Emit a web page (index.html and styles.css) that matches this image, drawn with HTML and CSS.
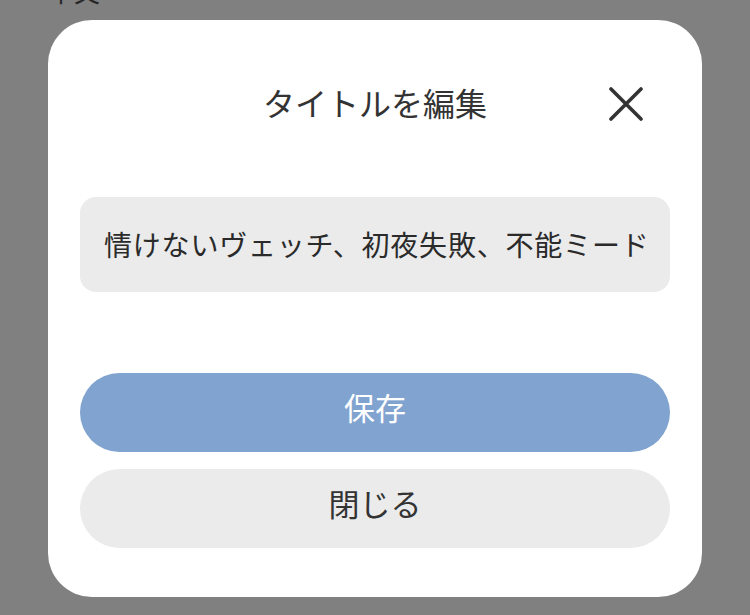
FILE: index.html
```html
<!DOCTYPE html>
<html lang="ja">
<head>
<meta charset="utf-8">
<title>タイトルを編集</title>
<link rel="stylesheet" href="styles.css">
</head>
<body>
<div class="peek"><span>本文</span></div>
<div class="modal" role="dialog" aria-labelledby="dlg-title">
  <div class="modal-header">
    <span class="spacer"></span>
    <h2 id="dlg-title" class="modal-title">タイトルを編集</h2>
    <button class="close-x" aria-label="閉じる">
      <svg width="36" height="34" viewBox="0 0 36 34" aria-hidden="true">
        <path d="M3 2 L33 32 M33 2 L3 32" stroke="#333" stroke-width="3.6" stroke-linecap="round" fill="none"/>
      </svg>
    </button>
  </div>
  <input class="title-input" type="text" value="情けないヴェッチ、初夜失敗、不能ミード">
  <div class="actions">
    <button class="btn btn-primary">保存</button>
    <button class="btn btn-secondary">閉じる</button>
  </div>
</div>
</body>
</html>
```
FILE: styles.css
```css
* { box-sizing: border-box; }
html, body {
  margin: 0;
  height: 615px;
  overflow: hidden;
}
body {
  background: #808080;
  font-family: "Noto Sans CJK JP", "Noto Sans", sans-serif;
  color: #333;
}
.peek {
  height: 20px;
  overflow: hidden;
  padding-left: 48px;
}
.peek span {
  display: block;
  margin-top: -24px;
  font-size: 26px;
  line-height: 30px;
  color: #262626;
}
.modal {
  margin: 0 48px;
  width: 654px;
  height: 577px;
  background: #fff;
  border-radius: 44px;
  padding: 44px 32px 49px;
  display: flex;
  flex-direction: column;
}
.modal-header {
  height: 80px;
  display: grid;
  grid-template-columns: 1fr auto 1fr;
  align-items: center;
  margin-bottom: 53px;
}
.modal-title {
  margin: 0 0 4px;
  font-size: 32px;
  font-weight: 400;
  color: #333;
  line-height: 1;
}
.close-x {
  justify-self: end;
  width: 88px;
  height: 60px;
  border: 0;
  background: none;
  padding: 0;
  display: flex;
  align-items: center;
  justify-content: center;
  cursor: pointer;
}
.title-input {
  width: 100%;
  height: 95px;
  border: 0;
  border-radius: 16px;
  background: #ebebeb;
  padding: 0 20px 2px 24px;
  font-family: "Noto Sans CJK JP", "Noto Sans", sans-serif;
  font-size: 28px;
  letter-spacing: 0.8px;
  color: #2a2a2a;
  outline: none;
}
.actions {
  margin-top: 81px;
  display: flex;
  flex-direction: column;
  gap: 17px;
}
.btn {
  height: 79px;
  border: 0;
  border-radius: 40px;
  padding: 0 0 12px;
  font-family: "Noto Sans CJK JP", "Noto Sans", sans-serif;
  font-size: 31px;
  cursor: pointer;
}
.btn-primary {
  background: #80a3cf;
  color: #fff;
}
.btn-secondary {
  background: #ebebeb;
  color: #333;
}
```
